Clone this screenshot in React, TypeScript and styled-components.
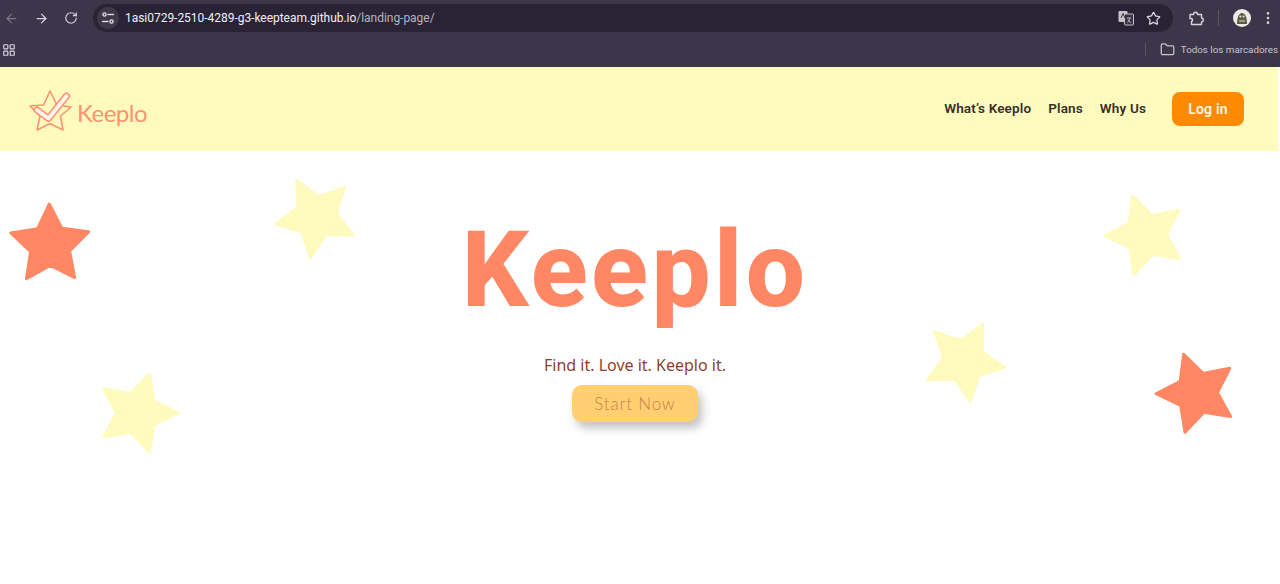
import {
  ArrowLeft,
  ArrowRight,
  EllipsisVertical,
  Folder,
  LayoutGrid,
  RotateCw,
  Star as StarIcon,
} from 'lucide-react'
import styled, { createGlobalStyle } from 'styled-components'

const CORAL = '#ff8763'
const PALE = '#fffabd'

const GlobalStyle = createGlobalStyle`
  html, body {
    margin: 0;
    height: 100%;
    background: white;
    overflow: hidden;
  }
`

const Page = styled.div`
  display: flex;
  flex-direction: column;
  width: 1280px;
  height: 584px;
  font-family: 'Roboto', sans-serif;
`

const Chrome = styled.div`
  display: flex;
  flex-direction: column;
  height: 67px;
  background: #3d3549;
  color: #d8d4de;
`

const Toolbar = styled.div`
  display: flex;
  align-items: center;
  gap: 8px;
  height: 36px;
`

const NavIcon = styled.span<{ $dim?: boolean }>`
  display: flex;
  justify-content: center;
  width: 22px;
  color: ${({ $dim }) => $dim ? '#7d7687' : '#d8d4de'};
`

const AddressBar = styled.div`
  display: flex;
  align-items: center;
  width: 1080px;
  height: 28px;
  margin-left: 3px;
  padding: 0 12px 0 4px;
  box-sizing: border-box;
  border-radius: 14px;
  background: #2a2336;
`

const SiteButton = styled.span`
  display: flex;
  align-items: center;
  justify-content: center;
  width: 22px;
  height: 22px;
  border-radius: 50%;
  background: #3f3849;
  margin-right: 6px;
`

const Url = styled.div`
  flex-grow: 1;
  font-size: 12px;
  letter-spacing: -.03px;
  color: #f2f0f5;

  span {
    color: #b9b4c0;
  }
`

const BarActions = styled.div`
  display: flex;
  align-items: center;
  gap: 12px;
  color: #dcd9e0;
`

const Divider = styled.span<{ $height: number }>`
  width: 1px;
  height: ${({ $height }) => $height}px;
  background: #5b5467;
`

const ToolbarEnd = styled.div`
  display: flex;
  align-items: center;
  margin-left: 7px;
  color: #d8d4de;

  > :nth-child(2) {
    margin: 0 14px;
  }
`

const Avatar = styled.svg`
  display: block;
  margin-right: 9px;
`

const Bookmarks = styled.div`
  display: flex;
  align-items: center;
  justify-content: space-between;
  height: 31px;
  padding: 0 2px 4px;
  box-sizing: border-box;
`

const AllBookmarks = styled.div`
  display: flex;
  align-items: center;
  font-size: 9.8px;
  color: #c9c5cf;

  > :first-child {
    margin-right: 14px;
  }

  > svg {
    margin-right: 6px;
  }
`

const Navbar = styled.header`
  display: flex;
  align-items: center;
  justify-content: space-between;
  width: 1278px;
  height: 84px;
  flex-shrink: 0;
  padding: 0 34px 0 29px;
  box-sizing: border-box;
  background: ${PALE};
`

const Brand = styled.div`
  display: flex;
  align-items: center;
  gap: 4px;
  margin-top: 6px;
  font-family: 'Lato', sans-serif;
  font-weight: 400;
  font-size: 24px;
  letter-spacing: -.5px;
  color: #ff9272;
`

const Menu = styled.nav`
  display: flex;
  align-items: center;
  gap: 17px;
  font-size: 13.5px;
  font-weight: 600;
  letter-spacing: .15px;
  color: #333029;
`

const MenuLink = styled.a`
  margin-top: -2px;
`

const LoginButton = styled.button`
  width: 72px;
  height: 34px;
  margin-left: 9px;
  border: none;
  border-radius: 8px;
  background: #ff8a00;
  color: #fff8ee;
  font-family: inherit;
  font-size: 14px;
  font-weight: 600;
  letter-spacing: .2px;
`

const Hero = styled.main`
  position: relative;
  display: flex;
  flex-direction: column;
  align-items: center;
  flex-grow: 1;
  padding-right: 10px;
  overflow: hidden;
`

const Title = styled.h1`
  margin: 55px 0 0;
  font-size: 105px;
  line-height: 130px;
  font-weight: 800;
  letter-spacing: 3.4px;
  color: ${CORAL};
`

const Tagline = styled.p`
  margin: 18px 0 0;
  font-family: 'Noto Sans', sans-serif;
  font-size: 16px;
  line-height: 22px;
  color: #8c3f2e;
`

const StartButton = styled.button`
  width: 126px;
  height: 37px;
  margin-top: 9px;
  border: none;
  border-radius: 10px;
  background: #ffcf70;
  box-shadow: 4px 6px 10px rgba(60, 60, 60, 32%);
  color: #c98050;
  font-family: 'Lato', sans-serif;
  font-size: 17px;
  font-weight: 300;
  letter-spacing: .8px;
`

const Decoration = styled.svg<{ $x: number, $y: number, $rotate: number }>`
  position: absolute;
  left: ${({ $x }) => $x - 45}px;
  top: ${({ $y }) => $y - 45 - 151}px;
  transform: rotate(${({ $rotate }) => $rotate}deg);
`

// five pointed star around 0,0
const starPoints = (outer: number, inner: number) => Array.from({ length: 10 }, (_, i) => {
  const angle = (i * Math.PI) / 5 - Math.PI / 2
  const radius = i % 2 === 0 ? outer : inner

  return `${(radius * Math.cos(angle)).toFixed(2)},${(radius * Math.sin(angle)).toFixed(2)}`
}).join(' ')

const stars = [
  { x: 50, y: 245, rotate: -1, color: CORAL },
  { x: 316, y: 217, rotate: -28, color: PALE },
  { x: 137, y: 413, rotate: 18, color: PALE },
  { x: 1146, y: 235, rotate: -19, color: PALE },
  { x: 964, y: 361, rotate: 27, color: PALE },
  { x: 1197, y: 393, rotate: -19, color: CORAL },
]

function BackgroundStar({ x, y, rotate, color }: typeof stars[number]) {
  return (
    <Decoration $x={x} $y={y} $rotate={rotate} width='90' height='90' viewBox='-45 -45 90 90'>
      <polygon
        points={starPoints(41, 20.5)}
        fill={color}
        stroke={color}
        strokeWidth='3'
        strokeLinejoin='round'
      />
    </Decoration>
  )
}

function Logo() {
  return (
    <svg width='44' height='44' viewBox='0 0 44 44' fill='none'>
      <polygon
        points='21,1 28,15 42,17 31.5,26 34,40 21,33.5 8,40 11,26 1,16 14.5,15'
        stroke='#ff9272'
        strokeWidth='1.6'
        strokeLinejoin='round'
      />
      <path d='M8 20 L19.5 28.5 L37.5 6' stroke='#ff9272' strokeWidth='7' strokeLinecap='round' strokeLinejoin='round' />
      <path d='M8 20 L19.5 28.5 L37.5 6' stroke='#fff5ea' strokeWidth='4' strokeLinecap='round' strokeLinejoin='round' />
    </svg>
  )
}

function TuneIcon() {
  return (
    <svg width='14' height='14' viewBox='0 0 14 14' fill='none' stroke='#e6e3ea' strokeWidth='1.3'>
      <circle cx='3.5' cy='3.5' r='1.6' />
      <path d='M6.5 3.5H13' />
      <path d='M1 10.5H7.5' />
      <circle cx='10.5' cy='10.5' r='1.6' />
    </svg>
  )
}

function TranslateIcon() {
  return (
    <svg width='16' height='16' viewBox='0 0 16 16'>
      <rect x='0.5' y='1' width='9' height='11' rx='1' fill='#c6c3ca' />
      <rect x='6.5' y='4' width='9' height='11' rx='1' fill='#3a3346' stroke='#c6c3ca' />
      <path d='M3 8 L5 3.5 L7 8' fill='none' stroke='#3a3346' strokeWidth='1' />
      <path d='M9 8 H13 M12 8 C11.5 10 10.5 11.5 9.5 12.5 M10 9.5 C10.5 11 11.5 12 13 12.5' fill='none' stroke='#c6c3ca' strokeWidth='.9' />
    </svg>
  )
}

function ExtensionIcon() {
  return (
    <svg width='16' height='16' viewBox='0 0 16 16' fill='none' stroke='#d8d4de' strokeWidth='1.4' strokeLinejoin='round'>
      <path d='M2 4.5H5.5C5.5 1.5 9.5 1.5 9.5 4.5H13.5V8C15.8 8 15.8 12 13.5 12V14.5H3.5V11.5C5 11 5 8.5 3 8.5L2 8.5Z' />
    </svg>
  )
}

function ProfileIcon() {
  return (
    <Avatar width='18' height='18' viewBox='0 0 18 18'>
      <circle cx='9' cy='9' r='9' fill='#ecebe6' />
      <path d='M4 15 C4 9 5.5 4 9 4 C12.5 4 14 9 14 15 Z' fill='#5d5a45' />
      <circle cx='7.4' cy='7.5' r='1' fill='#ecebe6' />
      <circle cx='10.6' cy='7.5' r='1' fill='#ecebe6' />
      <path d='M6 11 H12 V13 H6 Z' fill='#a39a83' />
    </Avatar>
  )
}

export default function App() {
  return (
    <Page>
      <GlobalStyle />

      <Chrome>
        <Toolbar>
          <NavIcon $dim><ArrowLeft size={15} /></NavIcon>
          <NavIcon><ArrowRight size={15} /></NavIcon>
          <NavIcon><RotateCw size={14} /></NavIcon>

          <AddressBar>
            <SiteButton><TuneIcon /></SiteButton>
            <Url>1asi0729-2510-4289-g3-keepteam.github.io<span>/landing-page/</span></Url>
            <BarActions>
              <TranslateIcon />
              <StarIcon size={15} />
            </BarActions>
          </AddressBar>

          <ToolbarEnd>
            <ExtensionIcon />
            <Divider $height={16} />
            <ProfileIcon />
            <EllipsisVertical size={16} />
          </ToolbarEnd>
        </Toolbar>

        <Bookmarks>
          <LayoutGrid size={14} />
          <AllBookmarks>
            <Divider $height={13} />
            <Folder size={15} />
            Todos los marcadores
          </AllBookmarks>
        </Bookmarks>
      </Chrome>

      <Navbar>
        <Brand>
          <Logo />
          Keeplo
        </Brand>

        <Menu>
          <MenuLink>What’s Keeplo</MenuLink>
          <MenuLink>Plans</MenuLink>
          <MenuLink>Why Us</MenuLink>
          <LoginButton>Log in</LoginButton>
        </Menu>
      </Navbar>

      <Hero>
        {stars.map(star => <BackgroundStar key={star.x} {...star} />)}
        <Title>Keeplo</Title>
        <Tagline>Find it. Love it. Keeplo it.</Tagline>
        <StartButton>Start Now</StartButton>
      </Hero>
    </Page>
  )
}
